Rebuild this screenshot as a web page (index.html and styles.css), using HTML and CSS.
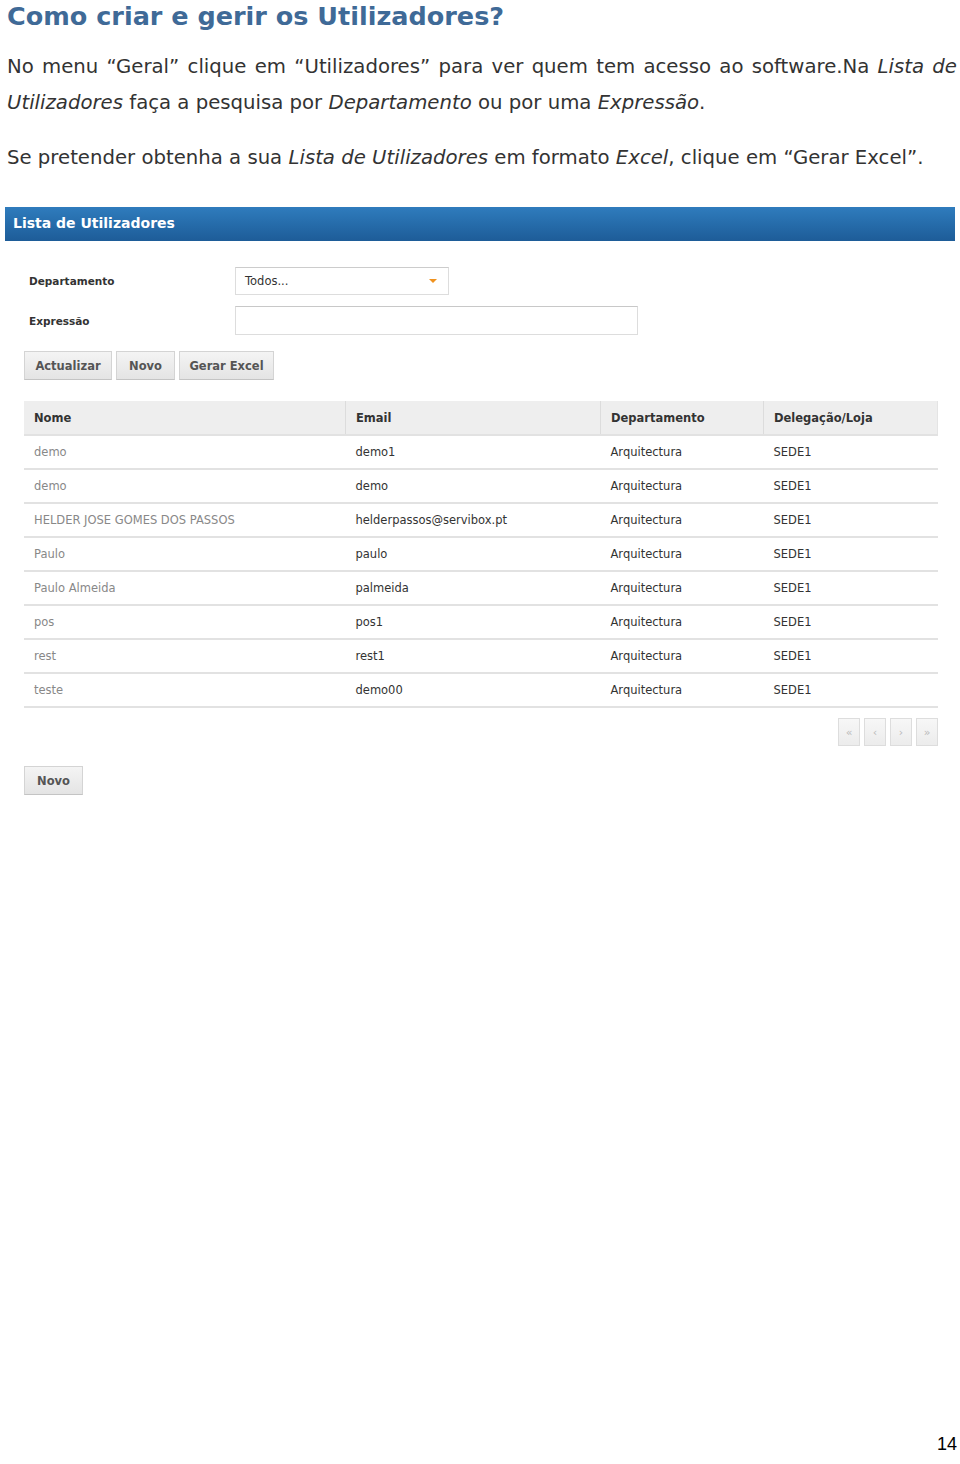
FILE: index.html
```html
<!DOCTYPE html>
<html lang="pt">
<head>
  <meta charset="UTF-8">
  <title>Como criar e gerir os Utilizadores?</title>
  <link rel="stylesheet" href="styles.css">
</head>
<body>

<div class="pagina">
  <h1>Como criar e gerir os Utilizadores?</h1>

  <p class="texto">No menu “Geral” clique em “Utilizadores” para ver quem tem acesso ao software.Na <em>Lista de Utilizadores</em> faça a pesquisa por <em>Departamento</em> ou por uma <em>Expressão</em>.</p>

  <p class="texto">Se pretender obtenha a sua <em>Lista de Utilizadores</em> em formato <em>Excel</em>, clique em “Gerar Excel”.</p>

  <div class="captura">
    <div class="captura-header">Lista de Utilizadores</div>

    <div class="filtros">
      <div class="campo">
        <label>Departamento</label>
        <div class="select">
          <span>Todos...</span>
          <span class="seta"></span>
        </div>
      </div>
      <div class="campo">
        <label>Expressão</label>
        <div class="input"></div>
      </div>
      <div class="botoes">
        <button class="btn btn-actualizar">Actualizar</button>
        <button class="btn btn-novo">Novo</button>
        <button class="btn btn-excel">Gerar Excel</button>
      </div>
    </div>

    <table class="tabela">
      <thead>
        <tr>
          <th class="col-nome">Nome</th>
          <th class="col-email">Email</th>
          <th class="col-dep">Departamento</th>
          <th class="col-loja">Delegação/Loja</th>
        </tr>
      </thead>
      <tbody>
        <tr><td class="nome">demo</td><td>demo1</td><td>Arquitectura</td><td>SEDE1</td></tr>
        <tr><td class="nome">demo</td><td>demo</td><td>Arquitectura</td><td>SEDE1</td></tr>
        <tr><td class="nome">HELDER JOSE GOMES DOS PASSOS</td><td>helderpassos@servibox.pt</td><td>Arquitectura</td><td>SEDE1</td></tr>
        <tr><td class="nome">Paulo</td><td>paulo</td><td>Arquitectura</td><td>SEDE1</td></tr>
        <tr><td class="nome">Paulo Almeida</td><td>palmeida</td><td>Arquitectura</td><td>SEDE1</td></tr>
        <tr><td class="nome">pos</td><td>pos1</td><td>Arquitectura</td><td>SEDE1</td></tr>
        <tr><td class="nome">rest</td><td>rest1</td><td>Arquitectura</td><td>SEDE1</td></tr>
        <tr><td class="nome">teste</td><td>demo00</td><td>Arquitectura</td><td>SEDE1</td></tr>
      </tbody>
    </table>

    <div class="paginacao">
      <span class="pag">«</span>
      <span class="pag">‹</span>
      <span class="pag">›</span>
      <span class="pag">»</span>
    </div>

    <div class="rodape-botoes">
      <button class="btn btn-novo-baixo">Novo</button>
    </div>
  </div>
</div>

<div class="num-pagina">14</div>

</body>
</html>
```

FILE: styles.css
```css
body {
  margin: 0;
  padding: 0;
  background: #fff;
  width: 960px;
  height: 1464px;
  position: relative;
  font-family: "DejaVu Sans", sans-serif;
}
.pagina {
  padding: 0 3px 0 7px;
}
h1 {
  margin: 0;
  padding-top: 0;
  font-family: "DejaVu Sans", Verdana, sans-serif;
  font-weight: bold;
  font-size: 25.5px;
  line-height: 32px;
  color: #3f6a97;
}
.texto {
  margin: 17px 0 0 0;
  font-size: 19.7px;
  line-height: 36px;
  color: #333;
  text-align: justify;
}
.texto + .texto {
  margin-top: 19px;
}
.captura {
  margin: 31px 0 0 -2px;
  width: 950px;
}
.captura-header {
  height: 34px;
  line-height: 32px;
  padding-left: 8px;
  background: linear-gradient(#2f7cbd, #1d5c98);
  color: #fff;
  font-weight: bold;
  font-size: 14px;
}
.filtros {
  padding: 26px 0 0 19px;
}
.campo {
  display: flex;
  align-items: center;
  margin-bottom: 11px;
}
.campo label {
  width: 206px;
  padding-left: 5px;
  font-size: 10.5px;
  font-weight: bold;
  color: #333;
}
.select {
  width: 214px;
  height: 28px;
  border: 1px solid #ddd;
  border-top-color: #ccc;
  display: flex;
  align-items: center;
  justify-content: space-between;
  padding: 0 11px 0 9px;
  box-sizing: border-box;
  font-size: 11.5px;
  color: #333;
}
.seta {
  width: 0;
  height: 0;
  border-left: 4px solid transparent;
  border-right: 4px solid transparent;
  border-top: 4px solid #f0921e;
}
.input {
  width: 403px;
  height: 29px;
  border: 1px solid #ddd;
  border-top-color: #c8c8c8;
  box-sizing: border-box;
}
.botoes {
  display: flex;
  gap: 4px;
  margin-top: 16px;
}
.btn {
  height: 29px;
  border: 1px solid #d4d4d4;
  border-bottom-color: #c4c4c4;
  background: linear-gradient(#f4f4f4, #e4e4e4);
  font-family: "DejaVu Sans", sans-serif;
  font-weight: bold;
  font-size: 11.5px;
  color: #555;
  padding: 0;
  cursor: pointer;
}
.btn-actualizar { width: 88px; }
.btn-novo { width: 59px; }
.btn-excel { width: 95px; }
.tabela {
  margin: 21px 0 0 19px;
  width: 914px;
  border-collapse: collapse;
  font-size: 11.5px;
}
.tabela th {
  height: 33px;
  background: #eee;
  text-align: left;
  font-weight: bold;
  color: #333;
  padding: 0 0 0 10px;
  border-right: 1px solid #dcdcdc;
  border-bottom: 2px solid #e2e2e2;
}
.tabela th:last-child {
  border-right: 1px solid #e4e4e4;
}
.col-nome { width: 311px; }
.col-email { width: 244px; }
.col-dep { width: 152px; }
.tabela td {
  height: 32px;
  padding: 0 0 0 10px;
  color: #333;
  border-bottom: 2px solid #e2e2e2;
}
.tabela td.nome {
  color: #888;
}
.paginacao {
  display: flex;
  justify-content: flex-end;
  gap: 4px;
  width: 933px;
  margin-top: 10px;
}
.pag {
  width: 20px;
  height: 26px;
  border: 1px solid #ddd;
  background: linear-gradient(#f7f7f7, #ececec);
  color: #bbb;
  font-size: 11px;
  display: flex;
  align-items: center;
  justify-content: center;
}
.rodape-botoes {
  padding: 20px 0 0 19px;
}
.btn-novo-baixo { width: 59px; }
.num-pagina {
  position: absolute;
  right: 3px;
  top: 1434px;
  font-family: "Liberation Sans", Arial, sans-serif;
  font-size: 18px;
  color: #000;
}
```
